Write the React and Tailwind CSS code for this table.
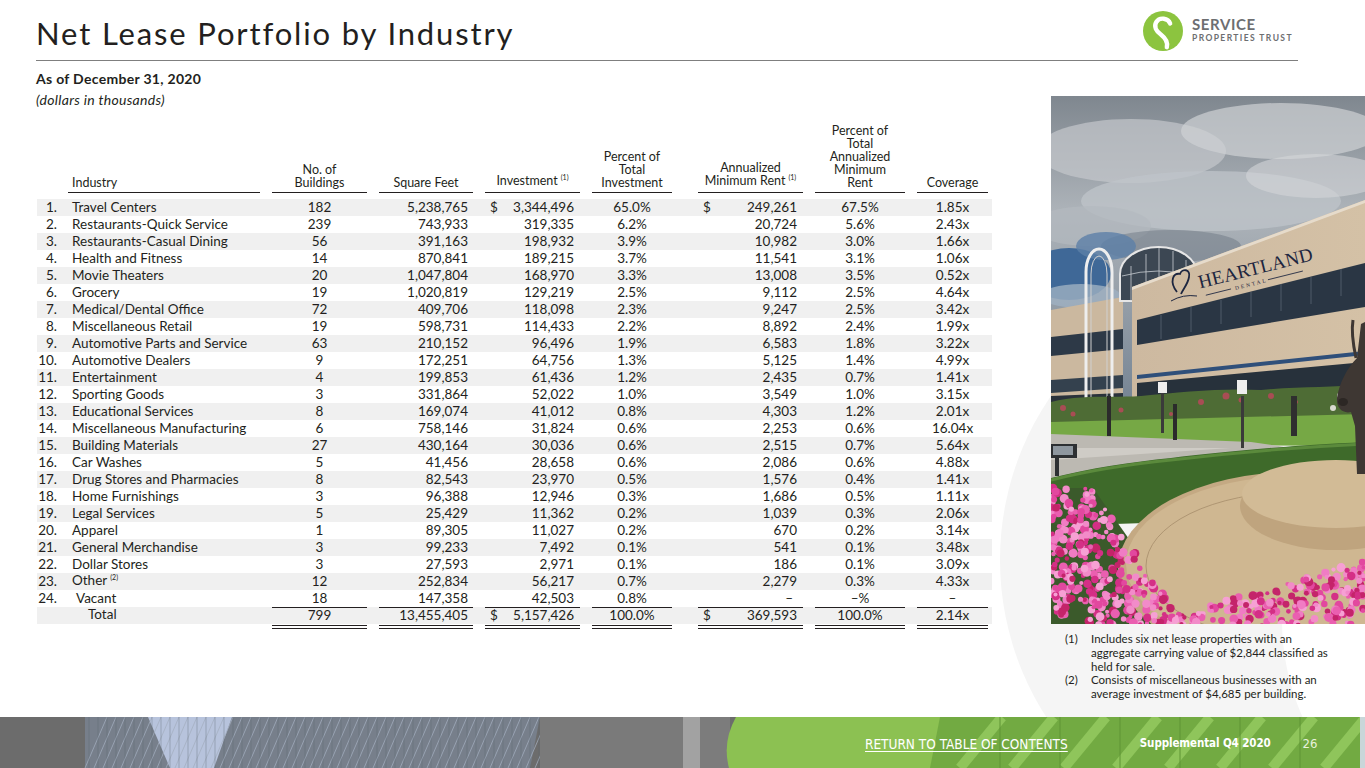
import React from "react";

const rows = [
  ["Travel Centers", "182", "5,238,765", "3,344,496", "65.0%", "249,261", "67.5%", "1.85x"],
  ["Restaurants-Quick Service", "239", "743,933", "319,335", "6.2%", "20,724", "5.6%", "2.43x"],
  ["Restaurants-Casual Dining", "56", "391,163", "198,932", "3.9%", "10,982", "3.0%", "1.66x"],
  ["Health and Fitness", "14", "870,841", "189,215", "3.7%", "11,541", "3.1%", "1.06x"],
  ["Movie Theaters", "20", "1,047,804", "168,970", "3.3%", "13,008", "3.5%", "0.52x"],
  ["Grocery", "19", "1,020,819", "129,219", "2.5%", "9,112", "2.5%", "4.64x"],
  ["Medical/Dental Office", "72", "409,706", "118,098", "2.3%", "9,247", "2.5%", "3.42x"],
  ["Miscellaneous Retail", "19", "598,731", "114,433", "2.2%", "8,892", "2.4%", "1.99x"],
  ["Automotive Parts and Service", "63", "210,152", "96,496", "1.9%", "6,583", "1.8%", "3.22x"],
  ["Automotive Dealers", "9", "172,251", "64,756", "1.3%", "5,125", "1.4%", "4.99x"],
  ["Entertainment", "4", "199,853", "61,436", "1.2%", "2,435", "0.7%", "1.41x"],
  ["Sporting Goods", "3", "331,864", "52,022", "1.0%", "3,549", "1.0%", "3.15x"],
  ["Educational Services", "8", "169,074", "41,012", "0.8%", "4,303", "1.2%", "2.01x"],
  ["Miscellaneous Manufacturing", "6", "758,146", "31,824", "0.6%", "2,253", "0.6%", "16.04x"],
  ["Building Materials", "27", "430,164", "30,036", "0.6%", "2,515", "0.7%", "5.64x"],
  ["Car Washes", "5", "41,456", "28,658", "0.6%", "2,086", "0.6%", "4.88x"],
  ["Drug Stores and Pharmacies", "8", "82,543", "23,970", "0.5%", "1,576", "0.4%", "1.41x"],
  ["Home Furnishings", "3", "96,388", "12,946", "0.3%", "1,686", "0.5%", "1.11x"],
  ["Legal Services", "5", "25,429", "11,362", "0.2%", "1,039", "0.3%", "2.06x"],
  ["Apparel", "1", "89,305", "11,027", "0.2%", "670", "0.2%", "3.14x"],
  ["General Merchandise", "3", "99,233", "7,492", "0.1%", "541", "0.1%", "3.48x"],
  ["Dollar Stores", "3", "27,593", "2,971", "0.1%", "186", "0.1%", "3.09x"],
  ["Other", "12", "252,834", "56,217", "0.7%", "2,279", "0.3%", "4.33x"],
  ["Vacant", "18", "147,358", "42,503", "0.8%", "–", "–%", "–"],
];

// column boxes, shared by header, rows and total
const C = {
  num: "w-[31px] shrink-0 pr-[11px] text-right",
  ind: "w-[192px] shrink-0 pl-[4px] text-left",
  bld: "ml-[12px] w-[95px] shrink-0 text-center",
  sqft: "ml-[12px] w-[94px] shrink-0 pr-[5px] text-right",
  inv: "ml-[12px] w-[95px] shrink-0 pl-[5px] pr-[6px] flex justify-between",
  pinv: "ml-[12px] w-[80px] shrink-0 text-center",
  rent: "ml-[26px] w-[105px] shrink-0 pl-[5px] pr-[6px] flex justify-between",
  prent: "ml-[12px] w-[90px] shrink-0 text-center",
  cov: "ml-[12px] w-[71px] shrink-0 text-center",
};

const TH = "border-b-[1.5px] border-[#231f20] pb-[3px]";

const Sup = ({ children }) => (
  <span className="relative -top-[5px] ml-[3px] text-[7px]">{children}</span>
);

const Logo = () => (
  <div className="mr-[72px] flex w-[150px] items-start pt-[11px]">
    <svg width="40" height="40" viewBox="0 0 42 42">
      <circle cx="21" cy="21" r="21" fill="#8cc43f" />
      <path
        d="M28.5 13 C26.5 7.5 17.5 6 14 11.5 C11 16.5 14 21.5 19 25 C23.5 28.5 26.5 32 25 38"
        stroke="#fff"
        strokeWidth="4.6"
        strokeLinecap="round"
        fill="none"
      />
    </svg>
    <div className="ml-[9px] flex flex-col text-[#6d6e71] font-bold">
      <span className="mt-[6px] text-[15px] leading-[15px] tracking-[0.6px]">SERVICE</span>
      <span className="mt-[2px] text-[8.5px] leading-[9px] tracking-[1.4px]">PROPERTIES TRUST</span>
    </div>
  </div>
);

const flowers = (() => {
  let s = 11;
  const rnd = () => {
    s = (s * 9301 + 49297) % 233280;
    return s / 233280;
  };
  const colors = ["#e2489f", "#f07cc4", "#d42f86", "#f6a0d4", "#c4246a", "#ea5fb0", "#f28bc9"];
  const out = [];
  for (let i = 0; i < 3000 && out.length < 560; i++) {
    const x = rnd() * 314;
    const y = 388 + rnd() * 142;
    const inLeft = y > 392 && x < 42 + (y - 395) * 0.68;
    const inBottom = y > 528 - (x - 95) * 0.3;
    if (inLeft || inBottom) {
      out.push({ x, y, r: 2 + rnd() * 2.6, c: colors[Math.floor(rnd() * colors.length)] });
    }
  }
  return out;
})();

const Photo = () => (
  <svg width="314" height="528" viewBox="0 0 314 528" className="block">
    <defs>
      <linearGradient id="sky" x1="0" y1="0" x2="0" y2="1">
        <stop offset="0" stopColor="#7f878f" />
        <stop offset="0.35" stopColor="#adb3b9" />
        <stop offset="0.6" stopColor="#97a0a9" />
        <stop offset="1" stopColor="#6f7f90" />
      </linearGradient>
      <linearGradient id="wall" x1="0" y1="0" x2="1" y2="0">
        <stop offset="0" stopColor="#cdb9a0" />
        <stop offset="1" stopColor="#d4c1a6" />
      </linearGradient>
    </defs>
    <rect width="314" height="330" fill="url(#sky)" />
    <ellipse cx="80" cy="55" rx="95" ry="32" fill="#c4c8cc" opacity="0.7" />
    <ellipse cx="230" cy="35" rx="100" ry="28" fill="#ced1d4" opacity="0.7" />
    <ellipse cx="160" cy="105" rx="130" ry="30" fill="#bfc4c9" opacity="0.75" />
    <ellipse cx="265" cy="80" rx="70" ry="22" fill="#d3d6d9" opacity="0.6" />
    <ellipse cx="40" cy="130" rx="60" ry="20" fill="#b3b9bf" opacity="0.7" />
    <ellipse cx="120" cy="150" rx="70" ry="16" fill="#6d7884" opacity="0.5" />
    <ellipse cx="18" cy="178" rx="42" ry="26" fill="#3f6897" />
    <ellipse cx="55" cy="150" rx="30" ry="14" fill="#5c80a8" opacity="0.8" />
    <ellipse cx="30" cy="200" rx="40" ry="12" fill="#9fb0c2" opacity="0.8" />

    {/* left wing */}
    <polygon points="0,214 72,201 72,312 0,312" fill="#cbb89f" />
    <polygon points="0,241 72,233 72,253 0,260" fill="#2d3947" />
    <polygon points="0,284 72,279 72,292 0,297" fill="#34414e" />
    <polygon points="0,300 72,297 72,312 0,312" fill="#2a323b" />

    {/* glass dome */}
    <path d="M69 205 L69 178 A38.5 27 0 0 1 146 178 L146 205 Z" fill="#3c4753" stroke="#e6e6e6" strokeWidth="2" />
    <path d="M80 170 L80 205 M95 158 L95 205 M108 152 L108 205 M122 155 L122 205 M135 164 L135 205" stroke="#c9ced3" strokeWidth="0.8" />
    <path d="M71 180 Q107 170 144 180" stroke="#c9ced3" strokeWidth="0.8" fill="none" />

    {/* arches */}
    <path d="M35 312 L35 176 A13 23 0 0 1 61 176 L61 312" stroke="#eeeeee" strokeWidth="3" fill="none" />
    <path d="M40 312 L40 178 A8 18 0 0 1 56 178 L56 312" stroke="#d0d0d0" strokeWidth="1" fill="none" />

    {/* main building */}
    <polygon points="81,191 314,104 314,297 81,311" fill="url(#wall)" />
    <polygon points="81,191 314,104 314,107 81,194" fill="#e6dbcb" />
    <polygon points="86,224 314,167 314,211 86,249" fill="#2a3644" />
    <path d="M110 243 L110 219 M140 236 L140 211 M170 228 L170 204 M200 221 L200 196 M230 215 L230 188 M260 208 L260 181 M290 200 L290 173" stroke="#4e5b69" strokeWidth="1" />
    <polygon points="86,279 314,255 314,259 86,283" fill="#2f4f7a" />
    <polygon points="86,287 314,266 314,297 86,311" fill="#27313b" />

    {/* sign */}
    <g transform="rotate(-14 190 175)">
      <text x="146" y="182" fontFamily="'Liberation Serif', serif" fontSize="19" fill="#1d2640" letterSpacing="0.3">
        HEARTLAND
      </text>
      <line x1="150" y1="190" x2="176" y2="190" stroke="#1d2640" strokeWidth="0.8" />
      <text x="180" y="192" fontFamily="'Liberation Serif', serif" fontSize="5.5" fill="#1d2640" letterSpacing="2">
        DENTAL
      </text>
      <line x1="214" y1="190" x2="250" y2="190" stroke="#1d2640" strokeWidth="0.8" />
    </g>
    <path d="M126 196 C118 186 122 176 129 178 C131 172 140 173 138 181 C137 188 132 193 130 198" stroke="#1d2640" strokeWidth="1.8" fill="none" />
    <path d="M120 205 Q132 198 146 200" stroke="#1d2640" strokeWidth="1" fill="none" />

    {/* bushes behind grass */}
    <path d="M0 306 C30 298 60 302 90 300 C130 296 170 292 210 294 C250 290 280 292 314 288 L314 330 L0 334 Z" fill="#4e6c35" />
    <g fill="#b8485a" opacity="0.85">
      <circle cx="12" cy="312" r="3" /><circle cx="22" cy="318" r="2.5" /><circle cx="70" cy="314" r="2.5" />
      <circle cx="150" cy="306" r="3" /><circle cx="175" cy="300" r="3.5" /><circle cx="190" cy="304" r="2.5" />
      <circle cx="220" cy="300" r="3" /><circle cx="245" cy="306" r="2" /><circle cx="120" cy="318" r="2" />
    </g>
    <g fill="#e9e6e2" opacity="0.9">
      <circle cx="290" cy="300" r="4" /><circle cx="300" cy="310" r="3.5" /><circle cx="282" cy="312" r="3" />
    </g>

    {/* grass */}
    <polygon points="0,326 314,318 314,350 0,348" fill="#76a845" />
    {/* walkway */}
    <polygon points="0,338 200,346 255,354 0,384" fill="#bcb9b2" />
    <polygon points="0,352 180,352 0,364" fill="#cfccc6" />

    {/* posts */}
    <rect x="56" y="300" width="4" height="40" fill="#2b2b2b" />
    <rect x="122" y="308" width="4" height="36" fill="#2b2b2b" />
    <rect x="190" y="300" width="3" height="52" fill="#3a3a3a" />
    <rect x="186" y="284" width="10" height="14" fill="#eeeeee" />
    <rect x="110" y="295" width="3" height="42" fill="#3a3a3a" />
    <rect x="107" y="286" width="9" height="11" fill="#eeeeee" />
    <rect x="240" y="300" width="6" height="40" fill="#2f2f2f" />

    {/* hedge */}
    <path d="M0 382 C40 372 80 366 120 362 C170 356 230 350 314 346 L314 420 L0 430 Z" fill="#3e6a2a" />
    <path d="M0 384 C40 374 80 368 120 364 C170 358 230 352 314 348" stroke="#5b8a3c" strokeWidth="3" fill="none" />

    {/* light fixture */}
    <rect x="0" y="348" width="26" height="14" fill="#2d3033" />
    <rect x="2" y="350" width="20" height="9" fill="#8e979f" />
    <rect x="4" y="362" width="4" height="18" fill="#2d3033" />

    {/* flower bed base */}
    <polygon points="0,392 42,392 138,528 0,528" fill="#3b5a2b" />
    <polygon points="95,528 314,462 314,528" fill="#3b5a2b" />

    {/* fountain */}
    <ellipse cx="245" cy="472" rx="178" ry="96" fill="#c4a983" />
    <ellipse cx="245" cy="468" rx="170" ry="88" fill="#cfb791" />
    <ellipse cx="245" cy="470" rx="150" ry="74" fill="none" stroke="#a68d6b" strokeWidth="0.8" />
    <ellipse cx="285" cy="410" rx="96" ry="44" fill="#bfa47e" />
    <ellipse cx="285" cy="398" rx="94" ry="34" fill="#d2bb96" />

    {/* statue */}
    <path d="M314 226 L310 228 L306 262 C296 272 288 288 286 302 C285 312 292 318 300 316 L304 330 L306 378 L314 378 Z" fill="#3e3733" />
    <path d="M305 262 C302 248 300 236 302 224" stroke="#3e3733" strokeWidth="3" fill="none" />
    <ellipse cx="292" cy="306" rx="5" ry="4" fill="#2c2724" />

    {/* petunias */}
    {flowers.map((f, i) => (
      <circle key={i} cx={f.x} cy={f.y} r={f.r} fill={f.c} />
    ))}
  </svg>
);

const Band = () => {
  const glass = [];
  for (let x = 85; x < 540; x += 9) glass.push(x);
  const stripes = [];
  for (let x = 960; x < 1360; x += 52) stripes.push(x);
  return (
    <svg className="absolute inset-0" width="1365" height="51" viewBox="0 0 1365 51" preserveAspectRatio="none">
      <rect width="1365" height="51" fill="#6c6c6c" />
      <polygon points="85,0 540,0 530,51 85,51" fill="#777f8b" />
      <polygon points="148,0 232,0 214,51 170,51" fill="#b7c3dc" />
      {glass.map((x) => (
        <line key={x} x1={x} y1="51" x2={x + 22} y2="0" stroke="#a4afc0" strokeWidth="1" opacity="0.75" />
      ))}
      {glass.map((x) => (
        <line key={"v" + x} x1={x + 4} y1="0" x2={x + 4} y2="51" stroke="#5d6571" strokeWidth="0.6" opacity="0.6" />
      ))}
      <rect x="540" y="0" width="143" height="51" fill="#7a7a7a" />
      <rect x="683" y="0" width="17" height="51" fill="#a2a2a2" />
      <rect x="700" y="0" width="30" height="51" fill="#7c7c7c" />
      <path d="M736 0 Q722 25 729 51 L1365 51 L1365 0 Z" fill="#8cc152" />
      <polygon points="940,0 1365,0 1365,51 930,51" fill="#72aa42" />
      {stripes.map((x) => (
        <line key={x} x1={x} y1="51" x2={x + 42} y2="0" stroke="#8fc55b" strokeWidth="10" />
      ))}
      <path d="M1000 0 L1000 51 M1060 0 L1060 51 M1120 0 L1120 51 M1180 0 L1180 51 M1240 0 L1240 51 M1300 0 L1300 51" stroke="#5e9435" strokeWidth="1" />
      <rect x="1360" y="0" width="5" height="51" fill="#c9d6d9" />
    </svg>
  );
};

export default function App() {
  return (
    <div className="relative w-[1365px] h-[768px] overflow-hidden bg-white text-[#231f20] font-['Lato',sans-serif]">
      {/* faint watermark ring */}
      <div className="absolute left-[1000px] top-[270px] w-[580px] h-[580px] rounded-full bg-[#f5f5f5]" />
      <div className="absolute left-[1282px] top-[380px] w-[480px] h-[480px] rounded-full bg-white" />

      <div className="relative flex h-[60px] items-start justify-between">
        <h1 className="pl-[36px] pt-[15px] text-[31px] leading-[36px] font-normal tracking-[1.85px]">
          Net Lease Portfolio by Industry
        </h1>
        <Logo />
      </div>
      <div className="relative ml-[36px] h-[1px] w-[1262px] bg-[#7f7f7f]" />

      <div className="relative flex h-[656px]">
        <div className="w-[1051px] shrink-0">
          <div className="pl-[36px] pt-[7px] text-[14px] leading-[21px] tracking-[0.3px]">
            <div className="font-bold">As of December 31, 2020</div>
            <div className="italic">(dollars in thousands)</div>
          </div>

          <div className="ml-[37px] mt-[14px] w-[955px] text-[13.5px]">
            <div className="flex items-end text-[12.5px] leading-[13px]">
              <div className={C.num} />
              <div className={`${C.ind} ${TH}`}>Industry</div>
              <div className={`${C.bld} ${TH}`}>
                No. of
                <br />
                Buildings
              </div>
              <div className={`ml-[12px] w-[94px] shrink-0 text-center ${TH}`}>Square Feet</div>
              <div className={`ml-[12px] w-[95px] shrink-0 text-center ${TH}`}>
                Investment<Sup>(1)</Sup>
              </div>
              <div className={`${C.pinv} ${TH}`}>
                Percent of
                <br />
                Total
                <br />
                Investment
              </div>
              <div className={`ml-[26px] w-[105px] shrink-0 text-center ${TH}`}>
                Annualized
                <br />
                Minimum Rent<Sup>(1)</Sup>
              </div>
              <div className={`${C.prent} ${TH}`}>
                Percent of
                <br />
                Total
                <br />
                Annualized
                <br />
                Minimum
                <br />
                Rent
              </div>
              <div className={`${C.cov} ${TH}`}>Coverage</div>
            </div>

            <div className="mt-[6px]">
              {rows.map((r, i) => (
                <div
                  key={r[0]}
                  className={`flex h-[17px] items-center leading-[17px] ${i % 2 === 0 ? "bg-[#f0f0f0]" : ""}`}
                >
                  <div className={C.num}>{i + 1}.</div>
                  <div className={C.ind}>
                    {r[0] === "Vacant" ? (
                      <span className="pl-[4px]">Vacant</span>
                    ) : r[0] === "Other" ? (
                      <>
                        Other<Sup>(2)</Sup>
                      </>
                    ) : (
                      r[0]
                    )}
                  </div>
                  <div className={C.bld}>{r[1]}</div>
                  <div className={C.sqft}>{r[2]}</div>
                  <div className={C.inv}>
                    <span>{i === 0 ? "$" : ""}</span>
                    <span>{r[3]}</span>
                  </div>
                  <div className={C.pinv}>{r[4]}</div>
                  <div className={C.rent}>
                    <span>{i === 0 ? "$" : ""}</span>
                    <span className={r[5] === "–" ? "pr-[4px]" : ""}>{r[5]}</span>
                  </div>
                  <div className={C.prent}>{r[6]}</div>
                  <div className={C.cov}>{r[7]}</div>
                </div>
              ))}

              <div className="flex h-[17px] items-stretch bg-[#f0f0f0] leading-[15px]">
                <div className="w-[223px] shrink-0 pl-[51px]">Total</div>
                <div className={`${C.bld} border-t border-[#231f20]`}>799</div>
                <div className={`${C.sqft} border-t border-[#231f20]`}>13,455,405</div>
                <div className={`${C.inv} border-t border-[#231f20]`}>
                  <span>$</span>
                  <span>5,157,426</span>
                </div>
                <div className={`${C.pinv} border-t border-[#231f20]`}>100.0%</div>
                <div className={`${C.rent} border-t border-[#231f20]`}>
                  <span>$</span>
                  <span>369,593</span>
                </div>
                <div className={`${C.prent} border-t border-[#231f20]`}>100.0%</div>
                <div className={`${C.cov} border-t border-[#231f20]`}>2.14x</div>
              </div>
              <div className="mt-[1px] flex">
                <div className="w-[223px] shrink-0" />
                <div className="ml-[12px] h-[4px] w-[95px] border-b-[4px] border-double border-[#231f20]" />
                <div className="ml-[12px] h-[4px] w-[94px] border-b-[4px] border-double border-[#231f20]" />
                <div className="ml-[12px] h-[4px] w-[95px] border-b-[4px] border-double border-[#231f20]" />
                <div className="ml-[12px] h-[4px] w-[80px] border-b-[4px] border-double border-[#231f20]" />
                <div className="ml-[26px] h-[4px] w-[105px] border-b-[4px] border-double border-[#231f20]" />
                <div className="ml-[12px] h-[4px] w-[90px] border-b-[4px] border-double border-[#231f20]" />
                <div className="ml-[12px] h-[4px] w-[71px] border-b-[4px] border-double border-[#231f20]" />
              </div>
            </div>
          </div>
        </div>

        <div className="w-[314px] shrink-0 pt-[35px]">
          <Photo />
          <div className="mt-[8px] pl-[14px] text-[11.5px] leading-[13.75px] text-[#231f20]">
            <div className="flex">
              <span className="w-[26px] shrink-0">(1)</span>
              <span>
                Includes six net lease properties with an
                <br />
                aggregate carrying value of $2,844 classified as
                <br />
                held for sale.
              </span>
            </div>
            <div className="flex">
              <span className="w-[26px] shrink-0">(2)</span>
              <span>
                Consists of miscellaneous businesses with an
                <br />
                average investment of $4,685 per building.
              </span>
            </div>
          </div>
        </div>
      </div>

      <div className="relative h-[51px]">
        <Band />
        <div className="relative flex h-full items-center pt-[3px] pl-[865px] text-white font-['DejaVu_Sans_Condensed','DejaVu_Sans',sans-serif] font-stretch-condensed">
          <span className="text-[13.5px] underline underline-offset-2">RETURN TO TABLE OF CONTENTS</span>
          <span className="ml-[72px] text-[11.5px] font-bold tracking-[-0.1px]">Supplemental Q4 2020</span>
          <span className="ml-[32px] text-[13px] text-[#e8f2dc]">26</span>
        </div>
      </div>
    </div>
  );
}
